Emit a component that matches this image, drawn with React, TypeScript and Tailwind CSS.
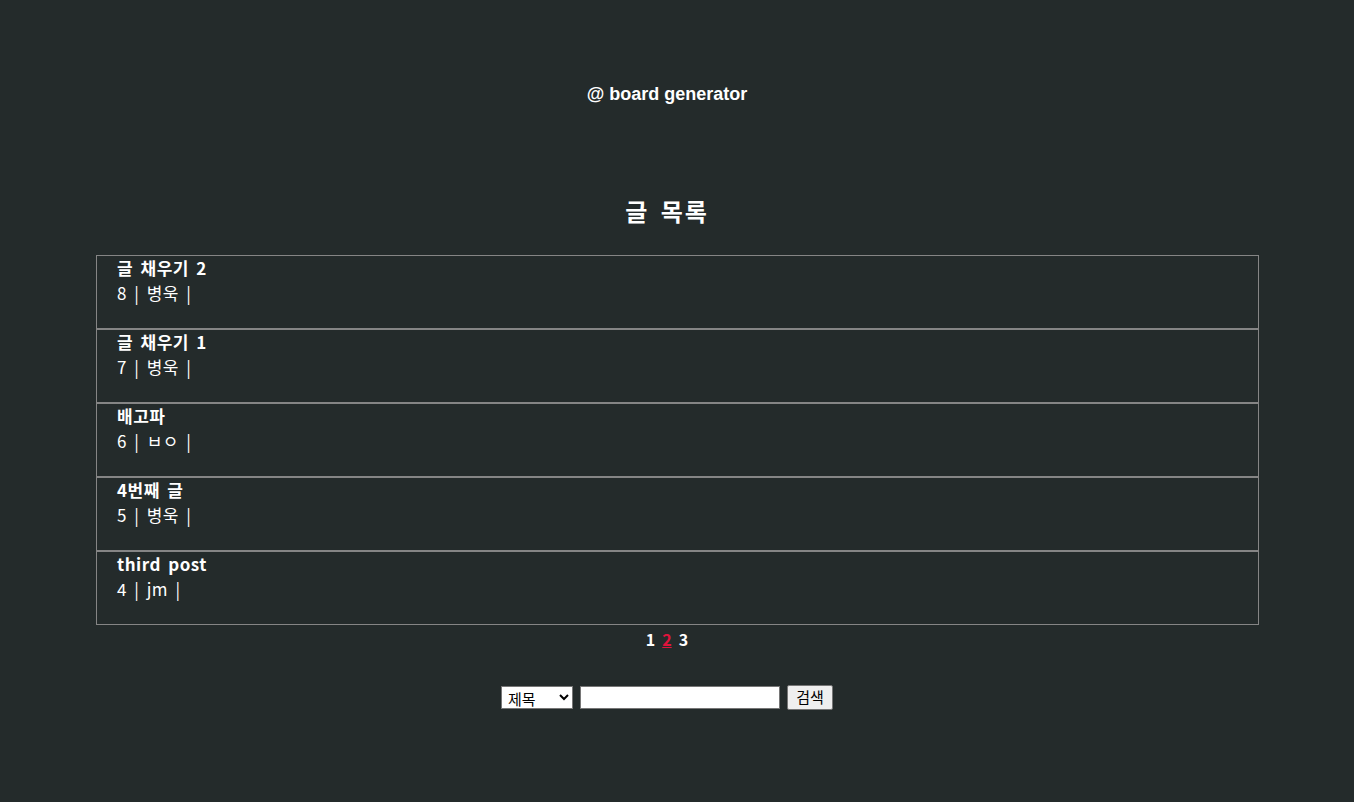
import React, { useState } from "react";

type Post = { id: number; title: string; author: string };

const posts: Post[] = [
  { id: 8, title: "글 채우기 2", author: "병욱" },
  { id: 7, title: "글 채우기 1", author: "병욱" },
  { id: 6, title: "배고파", author: "ㅂㅇ" },
  { id: 5, title: "4번째 글", author: "병욱" },
  { id: 4, title: "third post", author: "jm" },
];

const kr = "font-['Malgun_Gothic','Noto_Sans_CJK_KR',sans-serif]";

export default function App() {
  const [field, setField] = useState("title");
  const [query, setQuery] = useState("");

  return (
    <div className={`min-h-[802px] bg-[#242b2b] pr-[20px] text-white ${kr}`}>
      <header className="pt-[82px] text-center font-['Liberation_Sans',Arial,sans-serif] text-[18px] font-bold leading-[24px]">
        @ board generator
      </header>

      <h2 className="mt-[89px] text-center text-[24px] font-bold leading-[32px] tracking-[2px] [word-spacing:4px]">
        글 목록
      </h2>

      <ul className="mt-[28px] ml-[96px] w-[1163px]">
        {posts.map((p) => (
          <li
            key={p.id}
            className="h-[74px] border border-[#858585] pl-[20px] text-[17px] leading-[24px] tracking-[0.5px] [word-spacing:3px]"
          >
            <div className="font-bold">{p.title}</div>
            <div className="mt-[1px]">
              {p.id} | {p.author} |
            </div>
          </li>
        ))}
      </ul>

      <div className="mt-[2px] flex justify-center gap-[7px] text-[16px] font-bold leading-[24px]">
        <span>1</span>
        <span className="text-[#e0143c] underline">2</span>
        <span>3</span>
      </div>

      <form
        className="mt-[34px] flex items-center justify-center gap-[7px]"
        onSubmit={(e) => e.preventDefault()}
      >
        <select
          value={field}
          onChange={(e) => setField(e.target.value)}
          className="h-[23px] w-[72px] border border-[#767676] bg-white px-[2px] text-[15px] text-black"
        >
          <option value="title">제목</option>
          <option value="content">내용</option>
          <option value="author">작성자</option>
        </select>
        <input
          value={query}
          onChange={(e) => setQuery(e.target.value)}
          className="h-[23px] w-[200px] border border-[#767676] bg-white px-[2px] text-[13px] text-black"
        />
        <button
          type="submit"
          className="h-[25px] w-[46px] rounded-[2px] border border-[#767676] bg-[#efefef] text-[15px] text-black"
        >
          검색
        </button>
      </form>
    </div>
  );
}
